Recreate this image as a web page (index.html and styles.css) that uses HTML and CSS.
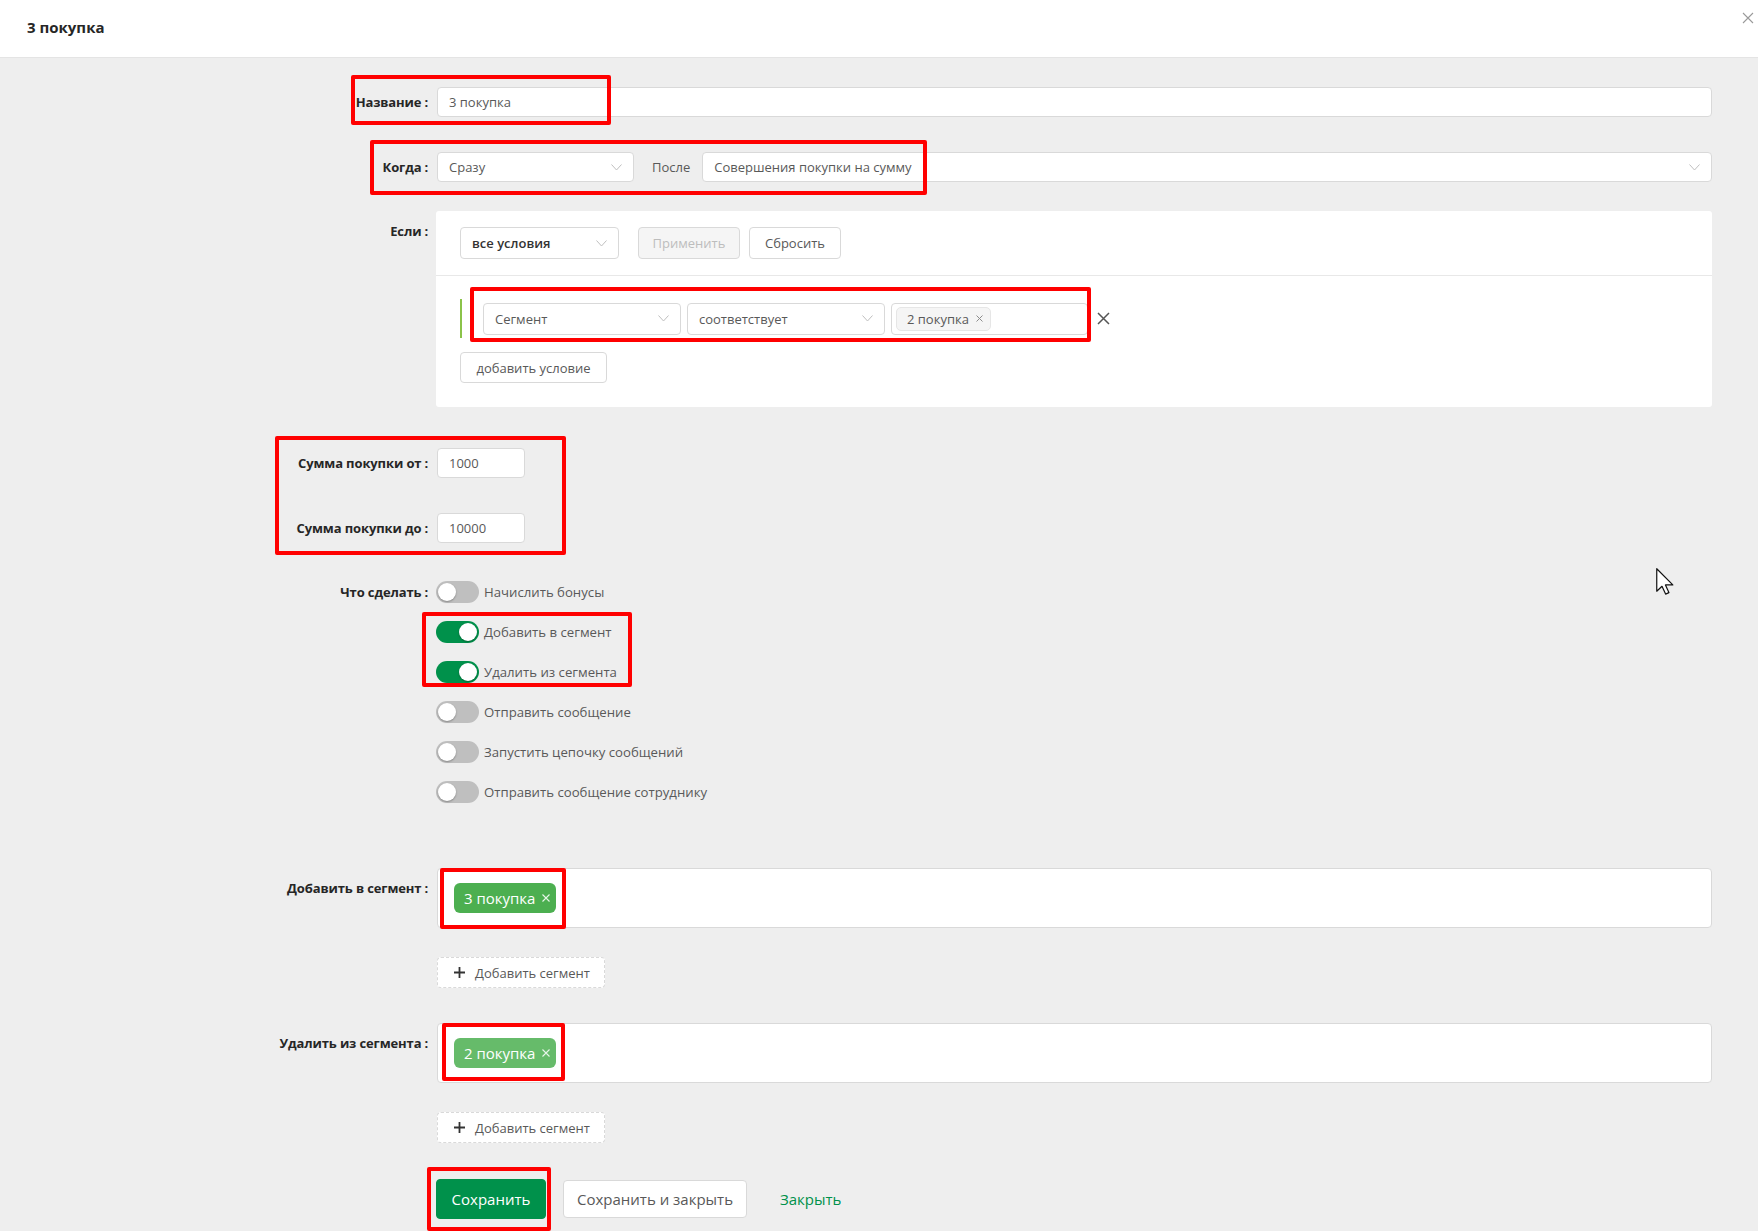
FILE: index.html
```html
<!DOCTYPE html>
<html lang="ru">
<head>
<meta charset="utf-8">
<title>3 покупка</title>
<link rel="stylesheet" href="styles.css">
</head>
<body>
<div class="page">
  <header class="modal-header">
    <h1 class="modal-title">3 покупка</h1>
    <button class="modal-close" type="button" aria-label="Закрыть">
      <svg width="12" height="12" viewBox="0 0 12 12"><path d="M1 1L11 11M11 1L1 11" stroke="#9a9a9a" stroke-width="1.1" fill="none"/></svg>
    </button>
  </header>

  <main class="form">
    <div class="form-item">
      <div class="form-label">Название</div>
      <div class="form-control">
        <div class="input">3 покупка</div>
      </div>
    </div>

    <div class="form-item mt-md">
      <div class="form-label">Когда</div>
      <div class="form-control inline">
        <div class="select select-when"><span>Сразу</span><svg class="chevron" width="11" height="7" viewBox="0 0 11 7"><path d="M0.5 0.5L5.5 6L10.5 0.5" fill="none" stroke="#bfbfbf" stroke-width="1"/></svg></div>
        <span class="inline-text">После</span>
        <div class="select select-grow"><span>Совершения покупки на сумму</span><svg class="chevron" width="11" height="7" viewBox="0 0 11 7"><path d="M0.5 0.5L5.5 6L10.5 0.5" fill="none" stroke="#bfbfbf" stroke-width="1"/></svg></div>
      </div>
    </div>

    <div class="form-item mt-sm">
      <div class="form-label label-top">Если</div>
      <div class="form-control">
        <div class="card">
          <div class="card-top">
            <div class="select select-mode"><span>все условия</span><svg class="chevron" width="11" height="7" viewBox="0 0 11 7"><path d="M0.5 0.5L5.5 6L10.5 0.5" fill="none" stroke="#bfbfbf" stroke-width="1"/></svg></div>
            <button class="btn btn-disabled btn-apply" type="button">Применить</button>
            <button class="btn btn-reset" type="button">Сбросить</button>
          </div>
          <div class="card-body">
            <div class="condition">
              <div class="select select-cond"><span>Сегмент</span><svg class="chevron" width="11" height="7" viewBox="0 0 11 7"><path d="M0.5 0.5L5.5 6L10.5 0.5" fill="none" stroke="#bfbfbf" stroke-width="1"/></svg></div>
              <div class="select select-cond"><span>соответствует</span><svg class="chevron" width="11" height="7" viewBox="0 0 11 7"><path d="M0.5 0.5L5.5 6L10.5 0.5" fill="none" stroke="#bfbfbf" stroke-width="1"/></svg></div>
              <div class="select select-cond select-tags">
                <span class="chip">2 покупка<svg class="chip-x" width="7" height="7" viewBox="0 0 7 7"><path d="M0.5 0.5L6.5 6.5M6.5 0.5L0.5 6.5" stroke="#8c8c8c" stroke-width="1" fill="none"/></svg></span>
              </div>
              <svg class="cond-remove" width="13" height="13" viewBox="0 0 13 13"><path d="M1 1L12 12M12 1L1 12" stroke="#555" stroke-width="1.5" fill="none"/></svg>
            </div>
            <button class="btn btn-add-cond" type="button">добавить условие</button>
          </div>
        </div>
      </div>
    </div>

    <div class="form-item mt-lg">
      <div class="form-label">Сумма покупки от</div>
      <div class="form-control">
        <div class="input input-sum">1000</div>
      </div>
    </div>

    <div class="form-item mt-md">
      <div class="form-label">Сумма покупки до</div>
      <div class="form-control">
        <div class="input input-sum">10000</div>
      </div>
    </div>

    <div class="form-item mt-sm">
      <div class="form-label label-switch">Что сделать</div>
      <div class="form-control">
        <div class="switch-row"><span class="switch"></span><span class="switch-text">Начислить бонусы</span></div>
        <div class="switch-row"><span class="switch is-on"></span><span class="switch-text">Добавить в сегмент</span></div>
        <div class="switch-row"><span class="switch is-on"></span><span class="switch-text">Удалить из сегмента</span></div>
        <div class="switch-row"><span class="switch"></span><span class="switch-text">Отправить сообщение</span></div>
        <div class="switch-row"><span class="switch"></span><span class="switch-text">Запустить цепочку сообщений</span></div>
        <div class="switch-row"><span class="switch"></span><span class="switch-text">Отправить сообщение сотруднику</span></div>
      </div>
    </div>

    <div class="form-item mt-xl">
      <div class="form-label label-box">Добавить в сегмент</div>
      <div class="form-control">
        <div class="tag-box">
          <span class="tag tag-add">3 покупка<svg class="tag-x" width="8" height="8" viewBox="0 0 8 8"><path d="M0.5 0.5L7.5 7.5M7.5 0.5L0.5 7.5" stroke="#e8f5e9" stroke-width="1.1" fill="none"/></svg></span>
        </div>
      </div>
    </div>

    <div class="form-item mt-sm">
      <div class="form-label empty"></div>
      <div class="form-control">
        <button class="btn btn-dashed" type="button"><svg class="plus" width="11" height="11" viewBox="0 0 11 11"><path d="M5.5 0V11M0 5.5H11" stroke="#333" stroke-width="1.8" fill="none"/></svg>Добавить сегмент</button>
      </div>
    </div>

    <div class="form-item mt-md">
      <div class="form-label label-box">Удалить из сегмента</div>
      <div class="form-control">
        <div class="tag-box">
          <span class="tag tag-remove">2 покупка<svg class="tag-x" width="8" height="8" viewBox="0 0 8 8"><path d="M0.5 0.5L7.5 7.5M7.5 0.5L0.5 7.5" stroke="#e8f5e9" stroke-width="1.1" fill="none"/></svg></span>
        </div>
      </div>
    </div>

    <div class="form-item mt-sm">
      <div class="form-label empty"></div>
      <div class="form-control">
        <button class="btn btn-dashed" type="button"><svg class="plus" width="11" height="11" viewBox="0 0 11 11"><path d="M5.5 0V11M0 5.5H11" stroke="#333" stroke-width="1.8" fill="none"/></svg>Добавить сегмент</button>
      </div>
    </div>

    <div class="form-item form-actions">
      <div class="form-label empty"></div>
      <div class="form-control inline">
        <button class="btn btn-primary" type="button">Сохранить</button>
        <button class="btn btn-secondary" type="button">Сохранить и закрыть</button>
        <a class="link-close" href="#">Закрыть</a>
      </div>
    </div>
  </main>

  <div class="annot annot-name"></div>
  <div class="annot annot-when"></div>
  <div class="annot annot-cond"></div>
  <div class="annot annot-sum"></div>
  <div class="annot annot-switch"></div>
  <div class="annot annot-tag-add"></div>
  <div class="annot annot-tag-remove"></div>
  <div class="annot annot-save"></div>

  <svg class="cursor" width="18" height="27" viewBox="0 0 12 18"><path d="M0.5 0.5V15.5L4 12.2L6.4 17.4L8.6 16.4L6.3 11.3H11.2Z" fill="#fff" stroke="#111" stroke-width="0.8" stroke-linejoin="round"/></svg>
</div>
</body>
</html>
```

FILE: styles.css
```css
* { box-sizing: border-box; }

html, body {
  margin: 0;
  padding: 0;
}

body {
  width: 1758px;
  min-height: 1231px;
  background: #eeeeee;
  font-family: "Open Sans", "Noto Sans", sans-serif;
  font-size: 13px;
  color: #595959;
}

.page {
  position: relative;
  min-height: 1231px;
  overflow: hidden;
}

/* header */
.modal-header {
  height: 58px;
  background: #fff;
  border-bottom: 1px solid #e4e4e4;
  display: flex;
  justify-content: space-between;
  align-items: flex-start;
  padding-left: 27px;
}

.modal-title {
  margin: 16px 0 0;
  font-size: 15px;
  line-height: 22px;
  font-weight: 700;
  color: #262626;
}

.modal-close {
  margin: 12px 4px 0 0;
  padding: 0;
  width: 12px;
  height: 12px;
  border: 0;
  background: none;
  display: flex;
}

/* form */
.form {
  padding: 29px 46px 0 0;
}

.form-item {
  display: grid;
  grid-template-columns: 436px 1fr;
}

.mt-sm { margin-top: 29px; }
.mt-md { margin-top: 35px; }
.mt-lg { margin-top: 41px; }
.mt-xl { margin-top: 56px; }
.form-actions { margin-top: 36px; }

.form-label {
  text-align: right;
  font-weight: 700;
  color: #262626;
  line-height: 30px;
  white-space: nowrap;
  letter-spacing: -0.12px;
}

.form-label::after {
  content: ":";
  margin: 0 8px 0 3px;
}

.form-label.empty::after { content: none; }

.label-top { padding-top: 5px; }
.label-switch { line-height: 40px; }
.label-box { padding-top: 5px; }

.form-control {
  min-width: 0;
}

.inline {
  display: flex;
  align-items: center;
}

.input {
  height: 30px;
  background: #fff;
  border: 1px solid #d9d9d9;
  border-radius: 4px;
  padding: 0 11px;
  line-height: 28px;
  color: #595959;
  margin-left: 1px;
}

.input-sum { width: 88px; }

.select {
  height: 30px;
  background: #fff;
  border: 1px solid #d9d9d9;
  border-radius: 4px;
  padding: 0 11px;
  display: flex;
  align-items: center;
  justify-content: space-between;
  color: #595959;
  flex: none;
}

.chevron { flex: none; }

.select-when { width: 197px; margin-left: 1px; }
.select-grow { flex: 1; margin-left: 12px; }

.inline-text {
  margin-left: 18px;
  color: #595959;
}

/* condition card */
.card {
  background: #fff;
  border-radius: 3px;
}

.card-top {
  display: flex;
  align-items: center;
  padding: 16px 24px;
  border-bottom: 1px solid #e8e8e8;
}

.select-mode {
  width: 159px;
  height: 32px;
  color: #333;
  font-weight: 600;
}

.btn {
  font-family: inherit;
  font-size: 13px;
  height: 32px;
  border: 1px solid #d9d9d9;
  border-radius: 4px;
  background: #fff;
  color: #595959;
  padding: 0;
  display: inline-flex;
  align-items: center;
  justify-content: center;
  cursor: pointer;
}

.btn-apply { width: 102px; margin-left: 19px; }
.btn-reset { width: 92px; margin-left: 9px; }

.btn-disabled {
  background: #f5f5f5;
  color: #bdbdbd;
}

.card-body {
  padding: 23px 24px 24px;
}

.condition {
  display: flex;
  align-items: center;
  height: 39px;
  border-left: 2px solid #8bc34a;
  padding-left: 21px;
}

.select-cond {
  width: 198px;
  height: 32px;
  margin-right: 6px;
}

.select-tags {
  width: 197px;
  padding: 0 4px;
  justify-content: flex-start;
  margin-right: 0;
}

.chip {
  height: 24px;
  display: inline-flex;
  align-items: center;
  padding: 0 7px 0 10px;
  background: #f5f5f5;
  border: 1px solid #e6e6e6;
  border-radius: 5px;
  color: #595959;
}

.chip-x { margin-left: 7px; }

.cond-remove {
  margin-left: 9px;
  flex: none;
}

.btn-add-cond {
  margin-top: 14px;
  width: 147px;
  height: 31px;
}

/* switches */
.switch-row {
  height: 40px;
  display: flex;
  align-items: center;
}

.switch {
  position: relative;
  width: 43px;
  height: 22px;
  border-radius: 11px;
  background: #bfbfbf;
  flex: none;
}

.switch::after {
  content: "";
  position: absolute;
  top: 2px;
  left: 2px;
  width: 18px;
  height: 18px;
  border-radius: 50%;
  background: #fff;
  box-shadow: 0 1px 2px rgba(0, 0, 0, 0.3);
}

.switch.is-on { background: #00914b; }
.switch.is-on::after { left: 23px; }

.switch-text {
  margin-left: 5px;
  color: #595959;
  font-size: 13.2px;
}

/* segment tags */
.tag-box {
  min-height: 60px;
  background: #fff;
  border: 1px solid #d9d9d9;
  border-radius: 4px;
  padding: 14px 16px;
  margin-left: 1px;
}

.tag {
  display: inline-flex;
  align-items: center;
  height: 30px;
  padding: 0 6px 0 10px;
  border-radius: 6px;
  color: #fff;
  font-size: 15px;
  font-weight: 400;
}

.tag-add { background: #4caf50; }
.tag-remove { background: #66bb6a; }

.tag-x { margin-left: 7px; }

.btn-dashed {
  height: 31px;
  width: 168px;
  border-style: dashed;
  justify-content: flex-start;
  padding-left: 16px;
  margin-left: 1px;
}

.plus { margin-right: 10px; }

/* actions */
.btn-primary {
  height: 40px;
  width: 110px;
  background: #00914b;
  border-color: #00914b;
  color: #fff;
  font-size: 15px;
}

.btn-secondary {
  height: 38px;
  width: 184px;
  margin-left: 17px;
  font-size: 15px;
}

.link-close {
  margin-left: 33px;
  color: #00914b;
  font-size: 15px;
  text-decoration: none;
}

/* annotation overlays */
.annot {
  position: absolute;
  border: 4px solid #ff0000;
  border-radius: 2px;
  pointer-events: none;
}

.annot-name { left: 351px; top: 75px; width: 260px; height: 50px; }
.annot-when { left: 370px; top: 140px; width: 557px; height: 55px; }
.annot-cond { left: 470px; top: 287px; width: 621px; height: 55px; }
.annot-sum { left: 275px; top: 436px; width: 291px; height: 119px; }
.annot-switch { left: 422px; top: 612px; width: 210px; height: 75px; }
.annot-tag-add { left: 440px; top: 868px; width: 126px; height: 61px; }
.annot-tag-remove { left: 442px; top: 1023px; width: 123px; height: 58px; }
.annot-save { left: 427px; top: 1167px; width: 124px; height: 64px; }

.cursor {
  position: absolute;
  left: 1656px;
  top: 568px;
}
```
